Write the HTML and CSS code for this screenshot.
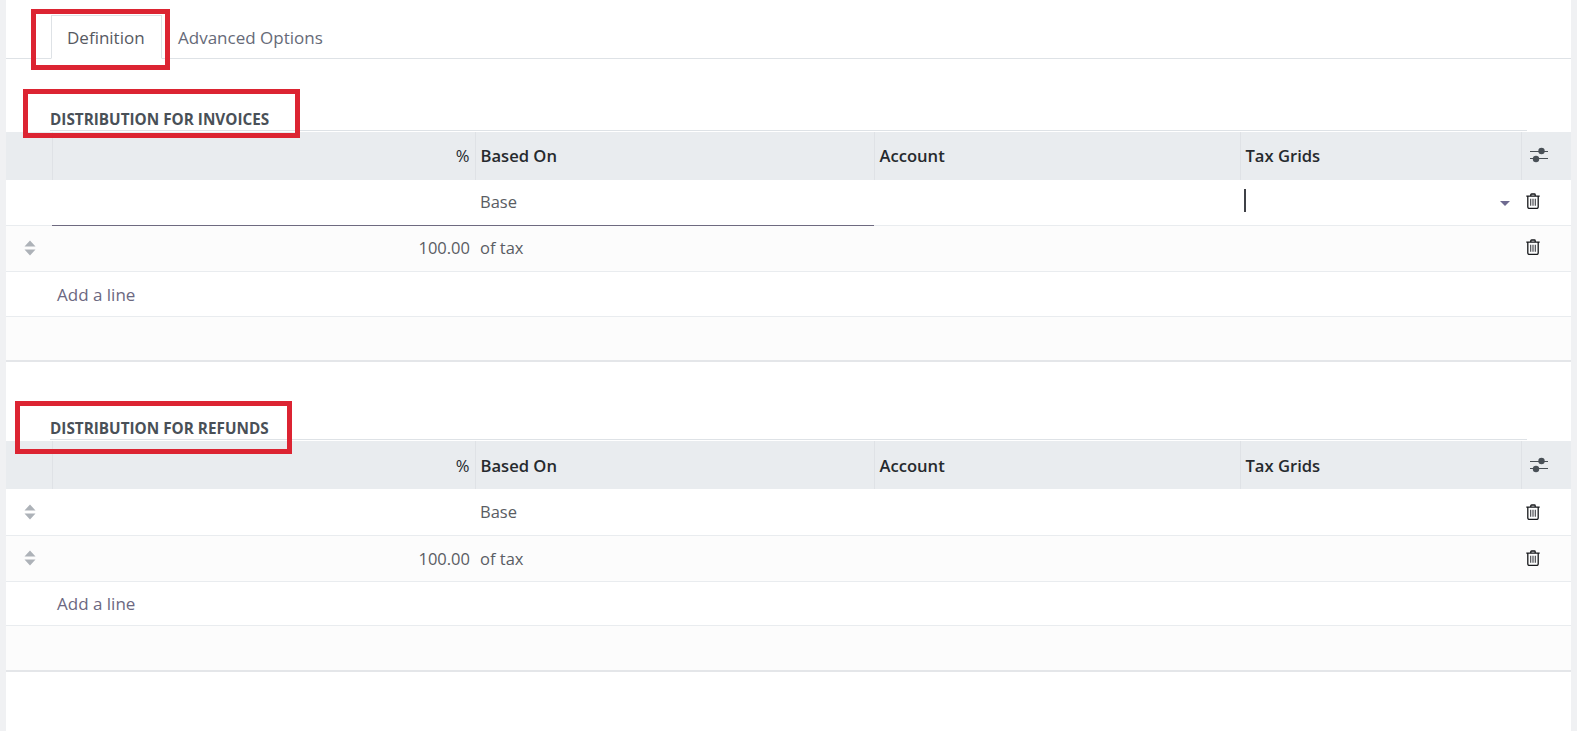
FILE: index.html
```html
<!DOCTYPE html>
<html lang="en">
<head>
<meta charset="utf-8">
<title>Tax distribution</title>
<link rel="stylesheet" href="styles.css">
</head>
<body>
<svg class="defs" width="0" height="0" aria-hidden="true">
  <symbol id="trash" viewBox="0 0 14 16">
    <path d="M4.800 3V1.800c0-.5.3-.8.8-.8h2.800c.5 0 .8.300.8.800V3M.3 3.200h13.400M1.800 3.200v10.900c0 .8.500 1.300 1.300 1.300h7.800c.8 0 1.300-.5 1.300-1.300V3.200" fill="none" stroke="#17191c" stroke-width="1.300"/>
    <path d="M4.700 5.800v7M7 5.800v7M9.300 5.800v7" fill="none" stroke="#3c3f44" stroke-width="1.100"/>
  </symbol>
  <symbol id="drag" viewBox="0 0 12 16">
    <path d="M6 .5 11.500 6.500H.5zM6 15.500.5 9.500h11z" fill="#adb2b8"/>
  </symbol>
  <symbol id="sliders" viewBox="0 0 18 16">
    <path d="M0 4.500h18M0 11.500h18" stroke="#495057" stroke-width="1"/>
    <circle cx="11.500" cy="4" r="3.200" fill="#495057"/>
    <circle cx="6" cy="12" r="3.200" fill="#495057"/>
  </symbol>
</svg>
<main class="sheet">
  <nav class="tabs">
    <a class="tab tab-active">Definition</a>
    <a class="tab">Advanced Options</a>
  </nav>

  <section class="group group-first">
    <h2 class="group-title">DISTRIBUTION FOR INVOICES</h2>
    <table class="lines">
      <colgroup><col class="c-drag"><col class="c-pct"><col class="c-base"><col class="c-acct"><col class="c-grid"><col class="c-act"></colgroup>
      <thead>
        <tr><th></th><th class="num">%</th><th>Based On</th><th>Account</th><th>Tax Grids</th><th class="act"><svg class="ic-sliders"><use href="#sliders"/></svg></th></tr>
      </thead>
      <tbody>
        <tr class="row row-edit">
          <td class="edit-none"></td><td class="edit-line"></td><td class="edit-line">Base</td><td></td>
          <td class="edit-cell"><span class="caret-text"></span><span class="caret-down"></span></td>
          <td class="act"><svg class="ic-trash"><use href="#trash"/></svg></td>
        </tr>
        <tr class="row row-alt">
          <td class="drag"><svg class="ic-drag"><use href="#drag"/></svg></td><td class="num">100.00</td><td>of tax</td><td></td><td></td>
          <td class="act"><svg class="ic-trash"><use href="#trash"/></svg></td>
        </tr>
        <tr class="row row-add"><td></td><td colspan="5" class="add">Add a line</td></tr>
      </tbody>
      <tfoot><tr><td colspan="6"></td></tr></tfoot>
    </table>
  </section>

  <section class="group group-second">
    <h2 class="group-title">DISTRIBUTION FOR REFUNDS</h2>
    <table class="lines">
      <colgroup><col class="c-drag"><col class="c-pct"><col class="c-base"><col class="c-acct"><col class="c-grid"><col class="c-act"></colgroup>
      <thead>
        <tr><th></th><th class="num">%</th><th>Based On</th><th>Account</th><th>Tax Grids</th><th class="act"><svg class="ic-sliders"><use href="#sliders"/></svg></th></tr>
      </thead>
      <tbody>
        <tr class="row">
          <td class="drag"><svg class="ic-drag"><use href="#drag"/></svg></td><td></td><td>Base</td><td></td><td></td>
          <td class="act"><svg class="ic-trash"><use href="#trash"/></svg></td>
        </tr>
        <tr class="row row-alt">
          <td class="drag"><svg class="ic-drag"><use href="#drag"/></svg></td><td class="num">100.00</td><td>of tax</td><td></td><td></td>
          <td class="act"><svg class="ic-trash"><use href="#trash"/></svg></td>
        </tr>
        <tr class="row row-add"><td></td><td colspan="5" class="add">Add a line</td></tr>
      </tbody>
      <tfoot><tr><td colspan="6"></td></tr></tfoot>
    </table>
  </section>

  <div class="mark mark-tab"></div>
  <div class="mark mark-invoices"></div>
  <div class="mark mark-refunds"></div>
</main>
</body>
</html>
```
FILE: styles.css
```css
* { box-sizing: border-box; }
html, body { margin: 0; height: 100%; overflow: hidden; }
body {
  background: #f0f1f3;
  font-family: "Open Sans", "Noto Sans", sans-serif;
  font-size: 16.5px;
  color: #5a5d63;
}
.defs { position: absolute; }
.sheet {
  position: relative;
  margin: 0 6px;
  height: 731px;
  background: #fff;
  padding-top: 15px;
}
.tabs {
  display: flex;
  height: 44px;
  padding-left: 45px;
  border-bottom: 1px solid #dee2e6;
}
.tab {
  display: block;
  height: 44px;
  padding: 0 17px 0 15px;
  line-height: 44px;
  font-size: 17px;
  color: #666a78;
  border: 1px solid transparent;
}
.tab-active {
  width: 111px;
  padding: 0 0 0 15px;
  color: #565962;
  background: #fff;
  border-color: #dee2e6 #dee2e6 #fff;
}
.group-first { padding-top: 45px; }
.group-second { padding-top: 51px; }
.group-title {
  margin: 0 44px;
  height: 27px;
  line-height: 30px;
  font-size: 15.3px;
  font-weight: 700;
  color: #495057;
  border-bottom: 1px solid #dee2e6;
}
.lines {
  width: 100%;
  margin-top: 1px;
  table-layout: fixed;
  border-collapse: collapse;
  border-bottom: 2px solid #e4e6e9;
}
.c-drag { width: 46px; }
.c-pct { width: 423px; }
.c-base { width: 399px; }
.c-acct { width: 366px; }
.c-grid { width: 281px; }
.c-act { width: 50px; }
thead th {
  height: 48px;
  padding: 0 5px;
  background: #e9ecef;
  color: #262a2e;
  font-size: 16.6px;
  font-weight: 600;
  text-align: left;
  border-left: 1px solid #dfe2e6;
}
thead th:first-child { border-left: 0; }
.num { text-align: right; }
thead th.num { font-weight: 400; }
.row td {
  height: 46px;
  padding: 0 5px;
  border-bottom: 1px solid #e9ecef;
}
.group-first thead th,
.group-first .row td { padding-bottom: 2px; }
.row-edit td { height: 45px; }
.row-alt td { background: #fcfcfc; }
.row-add td { height: 44px; }
.group-first .row-add td { height: 45px; }
.edit-line { border-bottom: 1px solid #6e6a80 !important; }
.group-first .row .add,
.row .add {
  padding: 1px 5px 0;
  font-size: 17px;
  color: #6c6881;
}
tfoot td {
  height: 46px;
  background: #fcfcfc;
}
.group-first tfoot td { height: 45px; }
.group-first .row .drag { padding-bottom: 0; }
.row .drag { padding-left: 0; padding-right: 0; }
.row .act, thead th.act { padding-left: 0; padding-right: 0; text-align: left; }
.ic-drag { display: block; width: 12px; height: 16px; margin-left: 18px; }
.ic-trash { display: block; width: 14px; height: 16px; margin-left: 5px; }
.ic-sliders { display: block; width: 18px; height: 16px; margin-left: 8px; }
.edit-cell { position: relative; }
.caret-text {
  position: absolute;
  left: 4px;
  top: 9px;
  width: 2px;
  height: 23px;
  background: #3f4147;
}
.caret-down {
  position: absolute;
  right: 11px;
  top: 21px;
  border-style: solid;
  border-width: 5px 5px 0;
  border-color: #6e6a90 transparent transparent;
}
.mark {
  position: absolute;
  border: 5px solid #dc2432;
  pointer-events: none;
}
.mark-tab { left: 25px; top: 9px; width: 139px; height: 61px; }
.mark-invoices { left: 17px; top: 89px; width: 277px; height: 49px; }
.mark-refunds { left: 9px; top: 401px; width: 277px; height: 53px; }
```
